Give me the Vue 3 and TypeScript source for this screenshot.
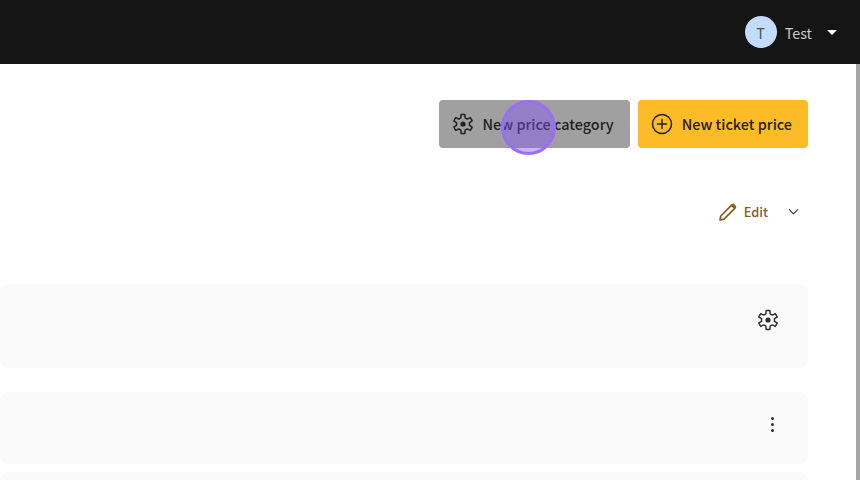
<template>
  <div class="page">
    <header class="topbar">
      <div class="avatar">T</div>
      <span class="user-name">Test</span>
      <span class="caret"></span>
    </header>
    <div class="body-wrap">
      <main class="content">
        <div class="actions">
          <button class="btn btn-grey">
            <svg class="icon" viewBox="0 0 24 24" fill="none" stroke="currentColor" stroke-width="1.5" stroke-linejoin="round">
              <path :d="gearPath" />
              <circle cx="12" cy="12" r="2.6" fill="currentColor" stroke="none" />
            </svg>
            <span class="btn-label">New price category</span>
          </button>
          <button class="btn btn-yellow">
            <svg class="icon" viewBox="0 0 24 24" fill="none" stroke="currentColor" stroke-width="1.5" stroke-linecap="round">
              <circle cx="12" cy="12" r="9.5" />
              <path d="M12 7.5v9M7.5 12h9" />
            </svg>
            <span class="btn-label">New ticket price</span>
          </button>
        </div>
        <div class="edit-row">
          <svg class="pencil" viewBox="0 0 20 20" fill="none" stroke="currentColor" stroke-width="1.7" stroke-linejoin="round">
            <path d="M2 18l.8-4L13.6 3.2l3.2 3.2L6 17.2z" />
            <path d="M14 2.2a1.6 1.6 0 0 1 2.3 0l1.5 1.5a1.6 1.6 0 0 1 0 2.3l-1 1L13 3.2z" fill="currentColor" stroke="none" />
          </svg>
          <span class="edit-label">Edit</span>
          <svg class="chevron" viewBox="0 0 12 12" fill="none" stroke="currentColor" stroke-width="1.2" stroke-linecap="round" stroke-linejoin="round">
            <path d="M1.5 4l4.5 4.5L10.5 4" />
          </svg>
        </div>
        <section class="panel panel-head">
          <svg class="icon panel-icon" viewBox="0 0 24 24" fill="none" stroke="currentColor" stroke-width="1.5" stroke-linejoin="round">
            <path :d="gearPath" />
            <circle cx="12" cy="12" r="2.6" fill="currentColor" stroke="none" />
          </svg>
        </section>
        <section class="panel panel-row">
          <div class="dots"><i></i><i></i><i></i></div>
        </section>
        <section class="panel panel-last"></section>
      </main>
      <div class="scrollbar"></div>
    </div>
    <div class="click-marker"></div>
  </div>
</template>

<script setup lang="ts">
// six toothed gear, one tooth straight up
const polar = (r: number, deg: number) => {
  const a = (deg * Math.PI) / 180
  return `${(12 + r * Math.cos(a)).toFixed(2)} ${(12 + r * Math.sin(a)).toFixed(2)}`
}

const gearPath = [0, 1, 2, 3, 4, 5]
  .map((i) => {
    const c = -90 + i * 60
    return [
      polar(6.5, c - 19),
      polar(9.7, c - 11),
      polar(9.7, c + 11),
      polar(6.5, c + 19)
    ].join('L')
  })
  .join('L')
  .replace(/^/, 'M')
  .concat('Z')
</script>

<style>
html,
body {
  margin: 0;
  overflow: hidden;
  background: #fff;
}
</style>

<style scoped>
.page {
  position: relative;
  width: 860px;
  height: 480px;
  overflow: hidden;
  font-family: "Noto Sans CJK SC", "Noto Sans", sans-serif;
  color: #212529;
}

.topbar {
  height: 64px;
  background: #151515;
  display: flex;
  align-items: center;
  justify-content: flex-end;
  padding-right: 23px;
  box-sizing: border-box;
}

.avatar {
  width: 32px;
  height: 32px;
  border-radius: 50%;
  background: #c4dcfb;
  color: #495057;
  font-size: 14.4px;
  display: flex;
  align-items: center;
  justify-content: center;
}

.user-name {
  margin-left: 8px;
  color: #c9c9c9;
  font-size: 14.4px;
}

.caret {
  margin-left: 15px;
  border-left: 5px solid transparent;
  border-right: 5px solid transparent;
  border-top: 5px solid #fff;
}

.body-wrap {
  display: flex;
  height: 416px;
}

.content {
  flex: 1;
  padding: 36px 48px 0 0;
  min-width: 0;
}

.actions {
  display: flex;
  justify-content: flex-end;
  gap: 8px;
}

.btn {
  height: 48px;
  border: none;
  border-radius: 4px;
  display: flex;
  align-items: center;
  gap: 8px;
  padding: 0 16px 0 12px;
  font-family: inherit;
  font-size: 14.4px;
  font-weight: 500;
  color: #212121;
}

.btn-label {
  padding-bottom: 2px;
}

.btn-grey {
  background: #a0a0a0;
}

.btn-yellow {
  background: #fdbb27;
}

.icon {
  width: 24px;
  height: 24px;
  flex: none;
}

.edit-row {
  display: flex;
  align-items: center;
  justify-content: flex-end;
  height: 20px;
  margin-top: 53px;
  padding: 0 9px 0 0;
  color: #8a5a22;
}

.pencil {
  width: 20px;
  height: 20px;
  margin-top: 1px;
}

.edit-label {
  margin-left: 6px;
  font-size: 12.8px;
  font-weight: 500;
}

.chevron {
  width: 11px;
  height: 11px;
  margin-left: 20px;
  color: #343a40;
}

.panel {
  background: #fafafa;
  border-radius: 8px;
  display: flex;
  align-items: center;
  justify-content: flex-end;
}

.panel-head {
  height: 84px;
  margin-top: 63px;
  padding: 0 28px 12px 0;
  box-sizing: border-box;
}

.panel-icon {
  color: #2b2f36;
}

.panel-row {
  height: 72px;
  margin-top: 24px;
  padding: 0 34px 8px 0;
  box-sizing: border-box;
}

.panel-last {
  height: 40px;
  margin-top: 8px;
}

.dots {
  display: flex;
  flex-direction: column;
  gap: 3px;
}

.dots i {
  display: block;
  width: 3px;
  height: 3px;
  border-radius: 50%;
  background: #2b2f36;
}

.scrollbar {
  width: 4px;
  flex: none;
  background: #a5a5a5;
}

.click-marker {
  position: absolute;
  left: 501px;
  top: 100px;
  width: 55px;
  height: 55px;
  box-sizing: border-box;
  border-radius: 50%;
  border: 3px solid #9a6ff0;
  background: rgba(130, 80, 250, 0.42);
}
</style>
